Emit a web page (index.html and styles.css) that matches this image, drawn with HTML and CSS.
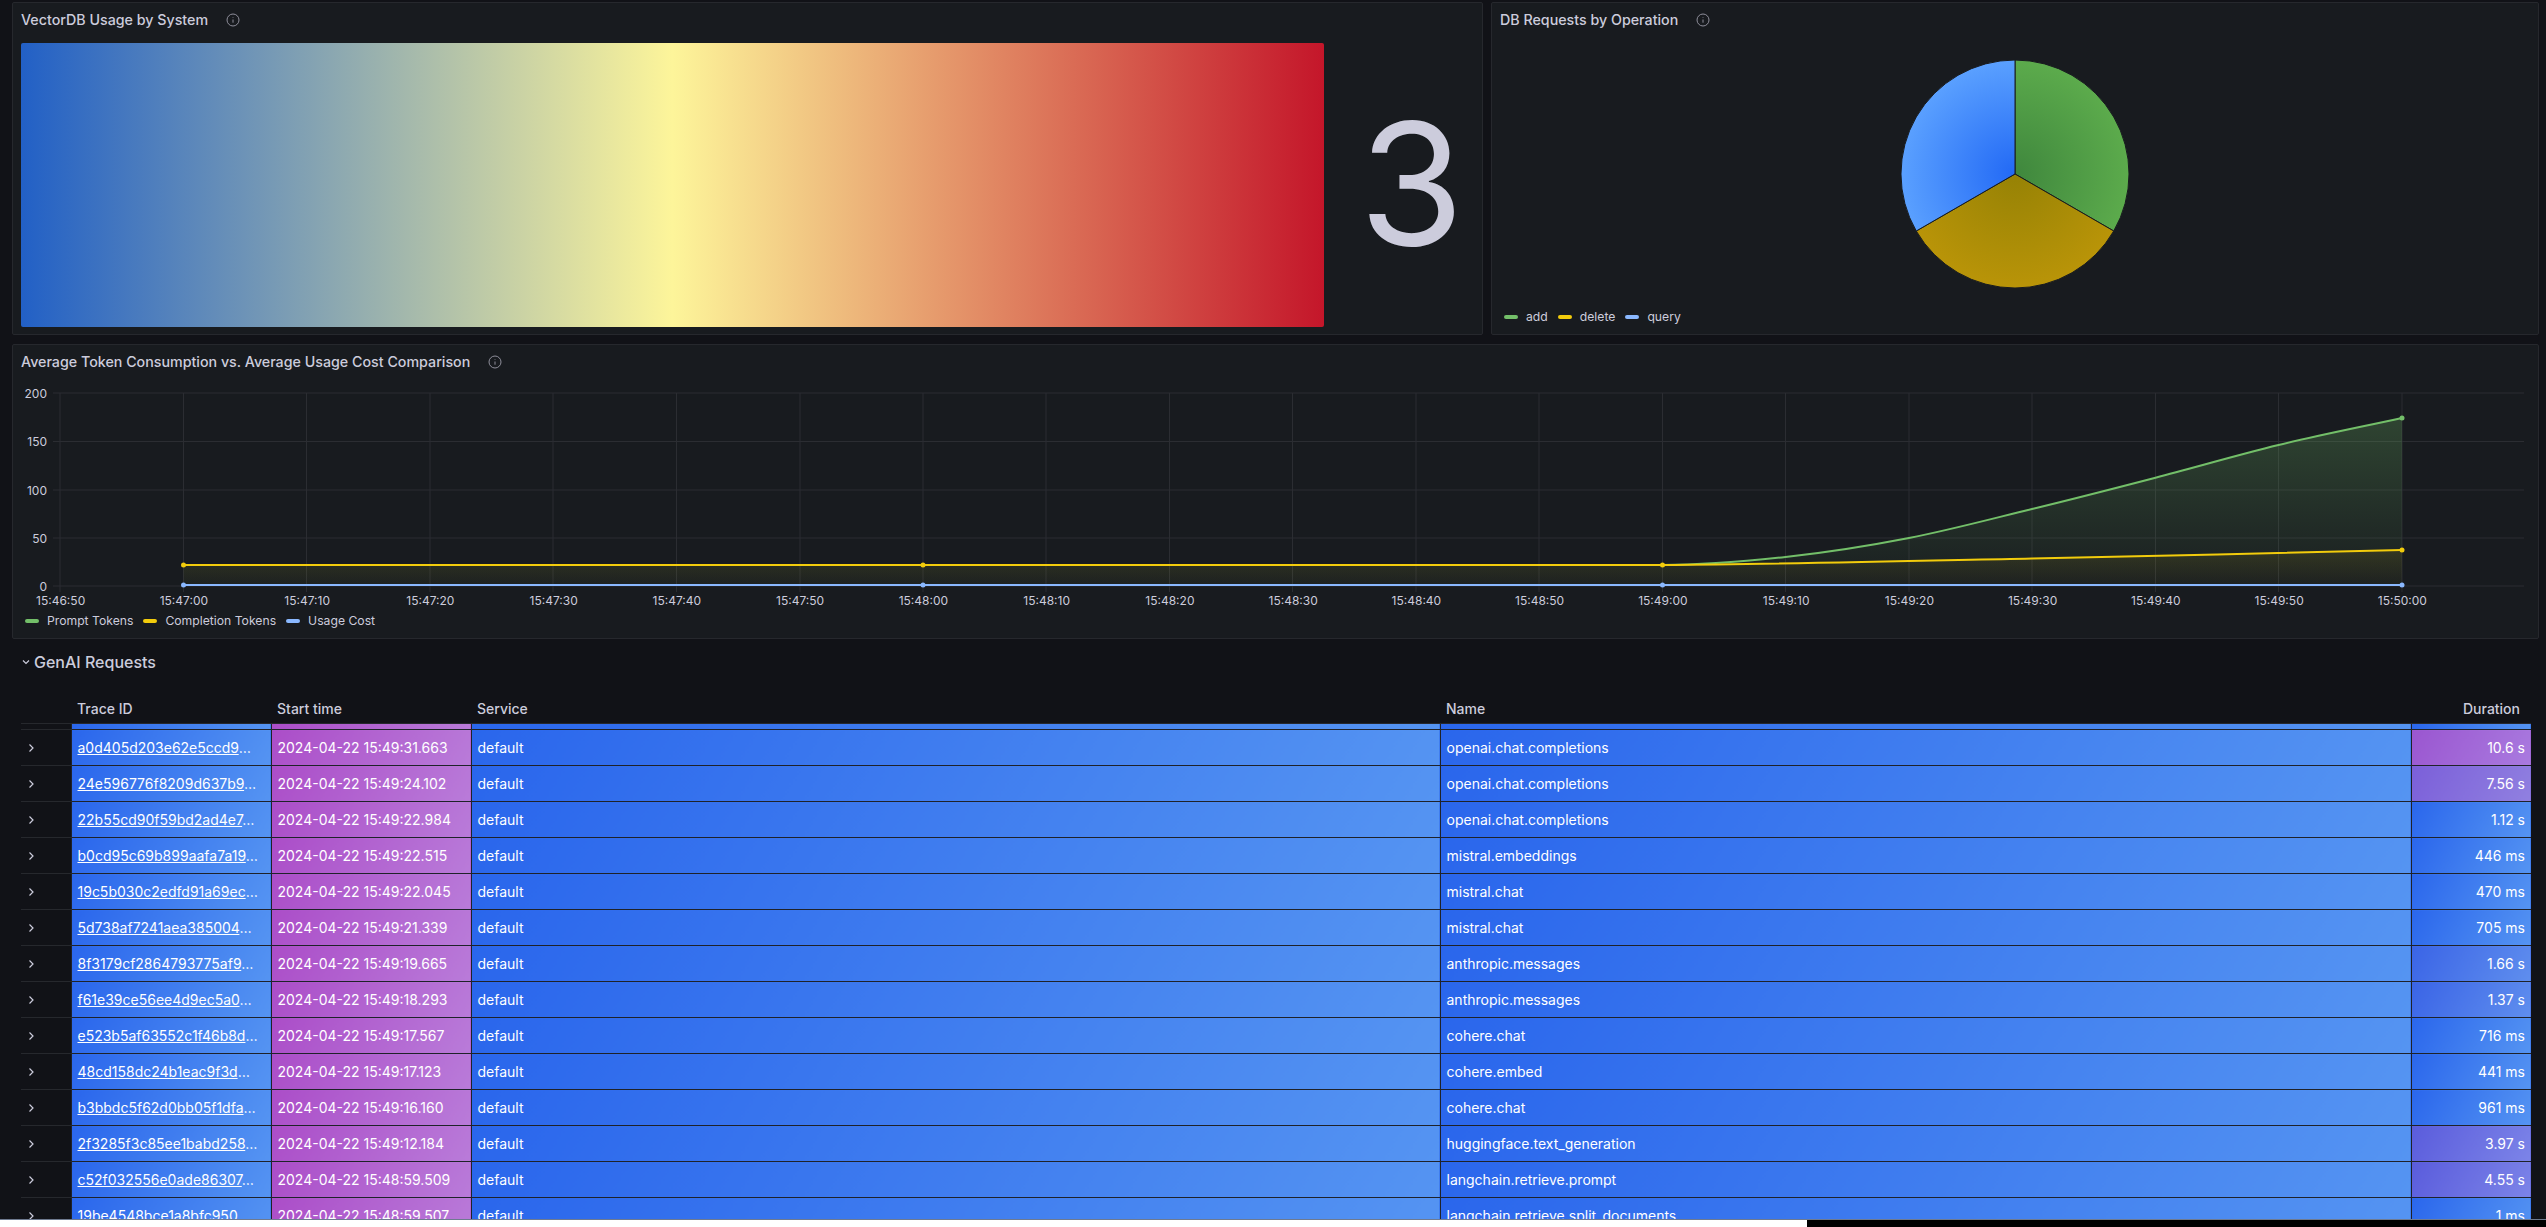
FILE: index.html
```html
<!DOCTYPE html>
<html lang="en">
<head>
  <meta charset="UTF-8" />
  <meta name="viewport" content="width=device-width, initial-scale=1.0"/>
  <title>GenAI Observability</title>
  <link rel="stylesheet" href="styles.css">
</head>
<body>
  <div class="dashboard">
    <div class="top-row">
      <section class="panel usage-panel">
        <div class="panel-title">
          <h3>VectorDB Usage by System</h3>
          <svg class="info" viewBox="0 0 14 14"><circle cx="7" cy="7" r="6"/><path d="M7 6.5v3.2M7 4.2v.6"/></svg>
        </div>
        <div class="gauge">
          <div class="gauge-bar"></div>
          <div class="big-value">3</div>
        </div>
      </section>

      <section class="panel ops-panel">
        <div class="panel-title">
          <h3>DB Requests by Operation</h3>
          <svg class="info" viewBox="0 0 14 14"><circle cx="7" cy="7" r="6"/><path d="M7 6.5v3.2M7 4.2v.6"/></svg>
        </div>
        <div class="pie-wrap">
          <svg class="pie" viewBox="-115 -115 230 230">
            <defs>
              <radialGradient id="pieGreen" gradientUnits="userSpaceOnUse" cx="0" cy="0" r="114">
                <stop offset="0" stop-color="#3f873d"/><stop offset="1" stop-color="#5cab4c"/>
              </radialGradient>
              <radialGradient id="pieYellow" gradientUnits="userSpaceOnUse" cx="0" cy="0" r="114">
                <stop offset="0" stop-color="#968205"/><stop offset="1" stop-color="#b99408"/>
              </radialGradient>
              <radialGradient id="pieBlue" gradientUnits="userSpaceOnUse" cx="0" cy="0" r="114">
                <stop offset="0" stop-color="#2269f5"/><stop offset="1" stop-color="#5aa0ff"/>
              </radialGradient>
            </defs>
            <path class="slice" fill="url(#pieGreen)" d="M0 0V-114A114 114 0 0 1 98.73 57Z"/>
            <path class="slice" fill="url(#pieYellow)" d="M0 0L98.73 57A114 114 0 0 1 -98.73 57Z"/>
            <path class="slice" fill="url(#pieBlue)" d="M0 0L-98.73 57A114 114 0 0 1 0 -114Z"/>
          </svg>
        </div>
        <div class="legend ops-legend">
          <span class="legend-item"><i class="swatch green"></i>add</span>
          <span class="legend-item"><i class="swatch yellow"></i>delete</span>
          <span class="legend-item"><i class="swatch blue"></i>query</span>
        </div>
      </section>
    </div>

    <section class="panel tokens-panel">
      <div class="panel-title">
        <h3>Average Token Consumption vs. Average Usage Cost Comparison</h3>
        <svg class="info" viewBox="0 0 14 14"><circle cx="7" cy="7" r="6"/><path d="M7 6.5v3.2M7 4.2v.6"/></svg>
      </div>
      <!-- viewBox uses page coordinates so the chart numbers are easy to check -->
      <svg class="chart" viewBox="13 380 2525 214">
        <defs>
          <linearGradient id="fillGreen" gradientUnits="userSpaceOnUse" x1="0" y1="418" x2="0" y2="586">
            <stop offset="0" stop-color="#73bf69" stop-opacity=".25"/><stop offset="1" stop-color="#73bf69" stop-opacity=".02"/>
          </linearGradient>
          <linearGradient id="fillYellow" gradientUnits="userSpaceOnUse" x1="0" y1="550" x2="0" y2="586">
            <stop offset="0" stop-color="#f2cc0c" stop-opacity=".1"/><stop offset="1" stop-color="#f2cc0c" stop-opacity=".01"/>
          </linearGradient>
        </defs>
        <g class="grid">
          <path d="M53 393H2524M53 441.5H2524M53 490H2524M53 538H2524M53 586H2524"/>
          <path d="M60 393V592M183.5 393V592M306.5 393V592M430 393V592M553 393V592M676.5 393V592M800 393V592M923 393V592M1046 393V592M1169.5 393V592M1292.5 393V592M1416 393V592M1539 393V592M1662.5 393V592M1785.5 393V592M1909 393V592M2032 393V592M2155.5 393V592M2278.5 393V592M2402 393V592"/>
        </g>
        <g class="y-labels">
          <text x="47" y="393">200</text>
          <text x="47" y="441.5">150</text>
          <text x="47" y="490">100</text>
          <text x="47" y="538">50</text>
          <text x="47" y="586">0</text>
        </g>
        <path fill="url(#fillGreen)" d="M183.5 565H1662.5C1703.5 565 1744.4 561.5 1785.5 557C1826.6 552.5 1867.9 546 1909 538C1950.1 530 1990.9 519 2032 509C2073.1 499 2114.4 488.4 2155.5 477.7C2196.6 467 2237.4 455 2278.5 445C2319.6 435 2361 427 2402 418V586H183.5Z"/>
        <path fill="url(#fillYellow)" d="M183.5 565H1662.5C1790 564 1910 561 2032 558.5S2280 553 2402 550V586H183.5Z"/>
        <path class="line green-line" d="M1662.5 565C1703.5 565 1744.4 561.5 1785.5 557C1826.6 552.5 1867.9 546 1909 538C1950.1 530 1990.9 519 2032 509C2073.1 499 2114.4 488.4 2155.5 477.7C2196.6 467 2237.4 455 2278.5 445C2319.6 435 2361 427 2402 418"/>
        <path class="line yellow-line" d="M183.5 565H1662.5C1790 564 1910 561 2032 558.5S2280 553 2402 550"/>
        <path class="line blue-line" d="M183.5 585H2402"/>
        <g class="points green-pt"><circle cx="2402" cy="418" r="2.5"/></g>
        <g class="points yellow-pt"><circle cx="183.5" cy="565" r="2.5"/><circle cx="923" cy="565" r="2.5"/><circle cx="1662.5" cy="565" r="2.5"/><circle cx="2402" cy="550" r="2.5"/></g>
        <g class="points blue-pt"><circle cx="183.5" cy="585" r="2.5"/><circle cx="923" cy="585" r="2.5"/><circle cx="1662.5" cy="585" r="2.5"/><circle cx="2402" cy="585" r="2.5"/></g>
      </svg>
      <div class="x-labels">
        <span>15:46:50</span><span>15:47:00</span><span>15:47:10</span><span>15:47:20</span><span>15:47:30</span>
        <span>15:47:40</span><span>15:47:50</span><span>15:48:00</span><span>15:48:10</span><span>15:48:20</span>
        <span>15:48:30</span><span>15:48:40</span><span>15:48:50</span><span>15:49:00</span><span>15:49:10</span>
        <span>15:49:20</span><span>15:49:30</span><span>15:49:40</span><span>15:49:50</span><span>15:50:00</span>
      </div>
      <div class="legend tokens-legend">
        <span class="legend-item"><i class="swatch green"></i>Prompt Tokens</span>
        <span class="legend-item"><i class="swatch yellow"></i>Completion Tokens</span>
        <span class="legend-item"><i class="swatch blue"></i>Usage Cost</span>
      </div>
    </section>

    <div class="row-title">
      <svg class="row-chevron" viewBox="0 0 10 10"><path d="M2 3.5 5 6.5 8 3.5"/></svg>
      <h2>GenAI Requests</h2>
    </div>

    <div class="table-wrap">
      <table class="requests">
        <colgroup>
          <col class="col-toggle"><col class="col-trace"><col class="col-time"><col class="col-service"><col class="col-name"><col class="col-duration">
        </colgroup>
        <thead>
          <tr><th></th><th>Trace ID</th><th>Start time</th><th>Service</th><th>Name</th><th class="num">Duration</th></tr>
        </thead>
        <tbody id="rows">
          <tr class="stub"><td class="toggle"></td><td class="cell-blue"></td><td class="cell-purple"></td><td class="cell-blue"></td><td class="cell-blue"></td><td class="cell-blue"></td></tr>
        </tbody>
      </table>
    </div>
  </div>
  <div class="bottom-bar"><span class="bar-white"></span><span class="bar-black"></span></div>

  <script>
    const requests = [
      ["a0d405d203e62e5ccd9", "2024-04-22 15:49:31.663", "openai.chat.completions", "10.6 s", "dur-high"],
      ["24e596776f8209d637b9", "2024-04-22 15:49:24.102", "openai.chat.completions", "7.56 s", "dur-upper"],
      ["22b55cd90f59bd2ad4e7", "2024-04-22 15:49:22.984", "openai.chat.completions", "1.12 s", "cell-blue"],
      ["b0cd95c69b899aafa7a19", "2024-04-22 15:49:22.515", "mistral.embeddings", "446 ms", "cell-blue"],
      ["19c5b030c2edfd91a69ec", "2024-04-22 15:49:22.045", "mistral.chat", "470 ms", "cell-blue"],
      ["5d738af7241aea385004", "2024-04-22 15:49:21.339", "mistral.chat", "705 ms", "cell-blue"],
      ["8f3179cf2864793775af9", "2024-04-22 15:49:19.665", "anthropic.messages", "1.66 s", "dur-low"],
      ["f61e39ce56ee4d9ec5a0", "2024-04-22 15:49:18.293", "anthropic.messages", "1.37 s", "dur-low"],
      ["e523b5af63552c1f46b8d", "2024-04-22 15:49:17.567", "cohere.chat", "716 ms", "cell-blue"],
      ["48cd158dc24b1eac9f3d", "2024-04-22 15:49:17.123", "cohere.embed", "441 ms", "cell-blue"],
      ["b3bbdc5f62d0bb05f1dfa", "2024-04-22 15:49:16.160", "cohere.chat", "961 ms", "cell-blue"],
      ["2f3285f3c85ee1babd258", "2024-04-22 15:49:12.184", "huggingface.text_generation", "3.97 s", "dur-mid"],
      ["c52f032556e0ade86307", "2024-04-22 15:48:59.509", "langchain.retrieve.prompt", "4.55 s", "dur-mid"],
      ["19be4548bce1a8bfc950", "2024-04-22 15:48:59.507", "langchain.retrieve.split_documents", "1 ms", "cell-blue"]
    ];

    const tbody = document.getElementById("rows");
    requests.forEach(r => {
      const row = document.createElement("tr");
      row.innerHTML = `
        <td class="toggle"><svg viewBox="0 0 10 10"><path d="M3.5 1.5 7 5 3.5 8.5"/></svg></td>
        <td class="cell-blue"><a href="#">${r[0]}</a>…</td>
        <td class="cell-purple">${r[1]}</td>
        <td class="cell-blue">default</td>
        <td class="cell-blue">${r[2]}</td>
        <td class="num ${r[4]}">${r[3]}</td>
      `;
      tbody.appendChild(row);
    });
  </script>
</body>
</html>
```

FILE: styles.css
```css
html, body {
  margin: 0;
  height: 100%;
  overflow: hidden;
}
body {
  background-color: #111217;
  color: #ccccdc;
  font-family: Inter, "Liberation Sans", sans-serif;
  font-size: 14px;
}
.dashboard {
  display: flex;
  flex-direction: column;
  height: 1220px;
  padding: 2px 7px 0 12px;
  box-sizing: border-box;
  overflow: hidden;
  border-bottom: 1px solid #6e7a90;
}
.top-row {
  display: grid;
  grid-template-columns: 1471px 1048px;
  gap: 8px;
  height: 333px;
  flex: none;
}
.panel {
  display: flex;
  flex-direction: column;
  min-width: 0;
  box-sizing: border-box;
  background-color: #181b1f;
  border: 1px solid #26282d;
  border-radius: 2px;
}
.panel-title {
  display: flex;
  align-items: center;
  gap: 18px;
  height: 33px;
  padding: 0 8px;
  flex: none;
}
.panel-title h3 {
  margin: 0;
  font-size: 14.25px;
  font-weight: 500;
  color: #ccccdc;
}
.info {
  width: 14px;
  height: 14px;
  fill: none;
  stroke: #8e8e9a;
  stroke-width: 1;
}

/* gauge */
.gauge {
  display: flex;
  flex: 1;
  padding: 7px 8px;
  min-height: 0;
}
.gauge-bar {
  width: 1303px;
  flex: none;
  border-radius: 2px;
  background: linear-gradient(90deg, #2260c6 0%, #fdf59a 50%, #c4162a 100%);
}
.big-value {
  flex: 1;
  display: flex;
  align-items: center;
  justify-content: center;
  padding: 0 0 4px 25px;
  font-size: 170px;
  font-weight: 400;
  line-height: 1;
  color: #ccccdc;
}

/* pie */
.ops-panel .pie-wrap {
  flex: 1;
  display: flex;
  justify-content: center;
  min-height: 0;
}
.pie {
  width: 230px;
  height: 230px;
  margin-top: 23px;
}
.slice {
  stroke: #181b1f;
  stroke-width: 1;
}
.legend {
  display: flex;
  font-size: 12.2px;
  color: #ccccdc;
}
.legend-item {
  display: inline-flex;
  align-items: center;
}
.swatch {
  width: 14px;
  height: 4px;
  border-radius: 2px;
  margin-right: 8px;
}
.swatch.green { background-color: #73bf69; }
.swatch.yellow { background-color: #f2cc0c; }
.swatch.blue { background-color: #8ab8ff; }
.ops-legend {
  gap: 10px;
  padding: 0 0 10px 12px;
}

/* time series */
.tokens-panel {
  height: 295px;
  margin-top: 9px;
  flex: none;
}
.chart {
  display: block;
  width: 2525px;
  height: 214px;
  flex: none;
  margin-top: 2px;
}
.grid path {
  fill: none;
  stroke: #2b2d32;
  stroke-width: 1;
}
.y-labels text {
  fill: #ccccdc;
  font-size: 12px;
  text-anchor: end;
  dominant-baseline: central;
}
.line {
  fill: none;
  stroke-width: 2;
}
.green-line { stroke: #73bf69; }
.yellow-line { stroke: #f2cc0c; }
.blue-line { stroke: #8ab8ff; }
.green-pt { fill: #73bf69; }
.yellow-pt { fill: #f2cc0c; }
.blue-pt { fill: #8ab8ff; }
.x-labels {
  display: grid;
  grid-template-columns: repeat(20, 123.25px);
  margin-left: -14px;
  height: 15px;
  margin-top: -1px;
  font-size: 12px;
  line-height: 15px;
  text-align: center;
  flex: none;
}
.tokens-legend {
  gap: 10px;
  padding: 5px 0 0 12px;
  line-height: 15px;
}

/* row header */
.row-title {
  display: flex;
  align-items: center;
  gap: 3px;
  height: 46px;
  padding-left: 9px;
  flex: none;
}
.row-chevron {
  width: 10px;
  height: 10px;
  fill: none;
  stroke: #ccccdc;
  stroke-width: 1.2;
}
.row-title h2 {
  margin: 0;
  font-size: 16px;
  font-weight: 500;
  color: #ccccdc;
}

/* requests table */
.table-wrap {
  flex: 1;
  min-height: 0;
  overflow: hidden;
  margin-left: 9px;
  margin-right: 1px;
}
.requests {
  width: 2510px;
  table-layout: fixed;
  border-collapse: collapse;
  color: #fff;
}
.col-toggle { width: 50px; }
.col-trace, .col-time { width: 200px; }
.col-service { width: 969px; }
.col-name { width: 971px; }
.col-duration { width: 120px; }
.requests th {
  height: 32px;
  padding: 0 6px 6px;
  vertical-align: bottom;
  font-weight: 500;
  text-align: left;
  color: #ccccdc;
  border-bottom: 1px solid #26282d;
}
.requests th.num {
  text-align: right;
  padding-right: 11px;
}
.requests td {
  height: 35px;
  padding: 0 6px;
  white-space: nowrap;
  overflow: hidden;
  border-bottom: 1px solid #1f2229;
  border-left: 1px solid #1f2229;
}
.requests td.num {
  text-align: right;
}
.requests .stub td {
  height: 5px;
  padding: 0;
}
.requests a {
  color: #fff;
  text-decoration: underline;
}
.requests td.toggle {
  background-color: #111217;
  border-left: none;
  border-bottom-color: #26282d;
  padding: 0 0 0 5px;
}
.toggle svg {
  display: block;
  width: 10px;
  height: 10px;
  fill: none;
  stroke: #ccccdc;
  stroke-width: 1.2;
}
.cell-blue { background: linear-gradient(120deg, #2a66ec, #5594f2); }
.cell-purple { background: linear-gradient(120deg, #ab4dc8, #b97bd9); }
.dur-high { background: linear-gradient(120deg, #9a56d0, #a97adf); }
.dur-upper { background: linear-gradient(120deg, #7b5fd9, #9080e0); }
.dur-mid { background: linear-gradient(120deg, #5a5cdc, #7c84e8); }
.dur-low { background: linear-gradient(120deg, #3a64e6, #5f8eee); }

/* strip along the bottom edge of the window */
.bottom-bar {
  display: flex;
  height: 7px;
}
.bar-white {
  width: 1807px;
  background-color: #fff;
}
.bar-black {
  flex: 1;
  background-color: #000;
}
```
